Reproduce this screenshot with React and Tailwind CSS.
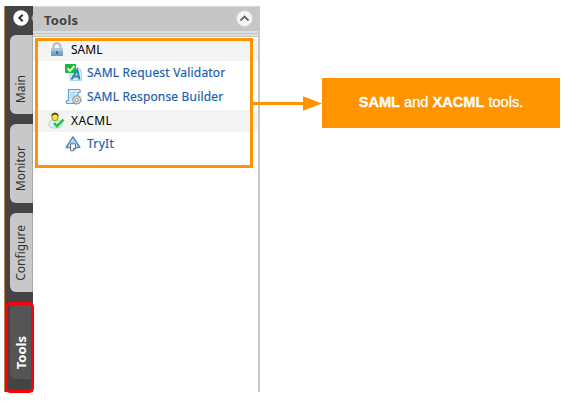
import React from "react";

function Lock() {
  return (
    <svg width="16" height="16" viewBox="0 0 16 16" className="ml-px shrink-0">
      <path d="M4.500 8V4.500a3.500 3.200 0 0 1 7 0V8" fill="none" stroke="#b3b8bb" strokeWidth="2" />
      <rect x="2" y="6.500" width="12" height="7.500" rx="1" fill="#86aecb" />
      <rect x="2" y="6.500" width="12" height="2.500" rx="1" fill="#a9c8dd" />
      <rect x="2" y="11.500" width="12" height="2.500" rx="1" fill="#6f9dbe" />
      <rect x="7" y="9" width="2" height="3" fill="#456d8c" />
    </svg>
  );
}

function Validator() {
  return (
    <svg width="18" height="18" viewBox="0 0 18 18" className="shrink-0">
      <path d="M5 4h9l2.500 3v9.500H5z" fill="#d9edf8" stroke="#b5d6e6" strokeWidth="1" />
      <path d="M6.500 15.500L12.300 6l2.200 9.500M9 12.500h5" fill="none" stroke="#2583b5" strokeWidth="2" />
      <rect x="0" y="0" width="11" height="9" rx="1" fill="#12bd35" />
      <path d="M2.500 4.300l2.500 2.500L9.300 2" fill="none" stroke="#fff" strokeWidth="1.900" />
    </svg>
  );
}

function Builder() {
  return (
    <svg width="18" height="18" viewBox="0 0 18 18" className="shrink-0">
      <path d="M3.500 1.500h11q1.800 1.300 0 3h-1.500v11H2q-1.500-1.500 0-3h1.500z" fill="#d5ebf9" stroke="#5fa3d3" strokeWidth="1.200" />
      <path d="M5.500 4.500h5M5.500 7h4M5.500 9.500h2" stroke="#9ccbe9" strokeWidth="1" />
      <circle cx="11.800" cy="11.800" r="4" fill="#e0e4e6" stroke="#98a1a8" strokeWidth="1.800" strokeDasharray="2.200 .7" />
      <circle cx="11.800" cy="11.800" r="1.600" fill="#fff" stroke="#87929a" />
    </svg>
  );
}

function UserCheck() {
  return (
    <svg width="18" height="18" viewBox="0 0 18 18" className="shrink-0">
      <path d="M1 12q0-4 5-4h3q5 0 5 4v1q0 3-6.500 3T1 13z" fill="#e1f0f5" stroke="#b4d0dc" />
      <path d="M4.500 8.200l3 3 2.500-3" fill="#fff" stroke="#bdd6df" strokeWidth=".8" />
      <ellipse cx="7" cy="5" rx="3.200" ry="3.900" fill="#f6e324" stroke="#8d7c13" strokeWidth=".8" />
      <path d="M3.400 4.500Q3.300.8 7 .8t3.600 3.700Q9.300 2.300 7 2.400T3.400 4.500" fill="#41401f" />
      <path d="M6 11.200l3 3 6.500-6.500" fill="none" stroke="#13c942" strokeWidth="2.500" />
    </svg>
  );
}

function TryIcon() {
  return (
    <svg width="18" height="18" viewBox="0 0 18 18" className="shrink-0">
      <path d="M8 1.800L14.800 12.500H1.200z" fill="#cfe8f5" stroke="#4f90b5" strokeWidth="1.500" strokeLinejoin="round" />
      <path d="M8 4.500L11.500 10h-7z" fill="#a9d3e8" />
      <path d="M5.500 8.800h5v5l-2 2h-3z" fill="#f7f7f7" stroke="#6c7174" />
      <path d="M8.500 15.500v-2h2" fill="none" stroke="#6c7174" />
    </svg>
  );
}

function Tab({ label, active, offset }) {
  return (
    <div
      className={
        "ml-[5px] flex w-[23px] items-center justify-center rounded-l-[6px] " +
        (active
          ? "h-[77px] bg-[#555] text-[13px] font-bold text-white"
          : "h-[79px] border-r border-[#aaa] bg-[#c8c8c8] text-[12px] text-[#333]")
      }
    >
      <span className={"rotate-180 whitespace-nowrap leading-none [writing-mode:vertical-rl] " + offset}>
        {label}
      </span>
    </div>
  );
}

function Group({ icon, label, spacing }) {
  return (
    <div className="flex h-[22px] items-center bg-[#f4f4f4] pl-[15px] text-[12px] text-black">
      <span className="flex w-[23px]">{icon}</span>
      <span className={spacing}>{label}</span>
    </div>
  );
}

function Item({ icon, label, spacing }) {
  return (
    <div className="flex h-6 items-center pl-[32px] text-[12px] text-[#1b5fae]">
      <span className="flex w-[22px]">{icon}</span>
      <span className={"whitespace-nowrap [-webkit-text-stroke:0.2px_#1b5fae] " + spacing}>{label}</span>
    </div>
  );
}

export default function App() {
  return (
    <div className="relative h-[401px] w-[568px] overflow-hidden bg-white pl-[4px] pt-[6px] font-['Noto_Sans','Open_Sans',sans-serif]">
      <div className="flex h-[386px] w-[256px]">
        <aside className="w-[29px] shrink-0 border-l border-[#b8864f] bg-[#444]">
          <div className="flex h-[29px] items-start pl-[8px] pt-[4px]">
            <svg width="20" height="16" viewBox="0 0 20 16">
              <circle cx="8" cy="8" r="7.700" fill="#fff" />
              <path d="M9.700 4.700L6.300 8l3.400 3.300" fill="none" stroke="#333" strokeWidth="2" />
              <path d="M20 4.500q-3 3.500 0 7" fill="#999" />
            </svg>
          </div>
          <nav className="flex flex-col gap-[10px]">
            <Tab label="Main" offset="mt-[29px]" />
            <Tab label="Monitor" offset="mt-[11px]" />
            <Tab label="Configure" offset="" />
            <Tab label="Tools" offset="mt-[24px]" active />
          </nav>
        </aside>
        <main className="flex min-w-0 flex-1 flex-col border-r-2 border-[#c8c8c8]">
          <header className="flex h-[25px] items-center justify-between border-t border-[#d8d8d8] bg-[#c6c6c6] pl-[11px] pr-[5px]">
            <h1 className="pt-[2px] text-[13px] font-bold leading-none tracking-[0.2px] text-[#444]">Tools</h1>
            <svg width="17" height="17" viewBox="0 0 17 17" className="mb-[2px]">
              <circle cx="8.500" cy="8.500" r="7.800" fill="#f5f5f5" stroke="#ddd" />
              <path d="M4.500 10.500l4-4 4 4" fill="none" stroke="#666" strokeWidth="1.800" />
            </svg>
          </header>
          <div className="h-[6px] border-b border-[#c3c3c3] bg-[#dedede] pt-[2px]">
            <div className="h-px bg-[#c2c2c2]" />
          </div>
          <section className="pt-[1px]">
            <div className="pt-[1px]"><Group icon={<Lock />} label="SAML" spacing="" /></div>
            <Item icon={<Validator />} label="SAML Request Validator" spacing="tracking-[0.2px]" />
            <Item icon={<Builder />} label="SAML Response Builder" spacing="tracking-[0.170px]" />
            <div className="pt-px"><Group icon={<UserCheck />} label="XACML" spacing="tracking-[0.4px]" /></div>
            <Item icon={<TryIcon />} label="TryIt" spacing="tracking-[0.3px]" />
          </section>
        </main>
      </div>
      <div className="absolute left-[35px] top-[38px] h-[130px] w-[218px] border-[3px] border-[#ff9300]" />
      <div className="absolute left-[5px] top-[302px] h-[91px] w-[29px] rounded-[5px] border-[3px] border-[#fb0007]" />
      <div className="absolute left-[253px] top-[78px] flex h-[50px] items-center">
        <svg width="69" height="16" viewBox="0 0 69 16">
          <path d="M0 8.500h52" stroke="#ff9300" strokeWidth="3" />
          <path d="M50 1.300l19 7.200-19 7.200z" fill="#ff9300" />
        </svg>
        <div className="flex h-[50px] w-[238px] items-center justify-center bg-[#ff9300] font-['Liberation_Sans',Arial,sans-serif] text-[14.600px] text-white">
          <p className="whitespace-nowrap [-webkit-text-stroke:0.3px_white]"><b>SAML</b> and <b>XACML</b> tools.</p>
        </div>
      </div>
    </div>
  );
}
